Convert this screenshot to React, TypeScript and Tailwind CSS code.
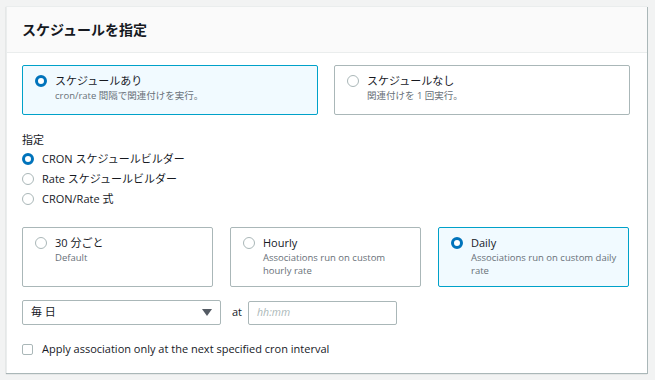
import React from "react";

const font = { fontFamily: '"Open Sans", "Noto Sans CJK JP", sans-serif' };

function Radio({ checked }: { checked: boolean }) {
  return checked ? (
    <span className="block w-[12px] h-[12px] rounded-full border-[3.5px] border-[#0073bb] bg-white shrink-0" />
  ) : (
    <span className="block w-[12px] h-[12px] rounded-full border border-[#aab7b8] bg-white shrink-0" />
  );
}

function Tile({ checked, title, desc, cls }: { checked: boolean; title: string; desc: string; cls: string }) {
  return (
    <div
      className={`${cls} border rounded-[2px] pl-[12px] pr-[6px] pt-[7px] ${
        checked ? "border-[#00a1c9] bg-[#f1faff]" : "border-[#aab7b8] bg-white"
      }`}
    >
      <div className="flex gap-[8px]">
        <div className="flex pt-[2px]">
          <Radio checked={checked} />
        </div>
        <div>
          <div className="text-[11px] leading-[16px] text-[#16191f]">{title}</div>
          <div className="text-[9.5px] leading-[13px] text-[#687078]">{desc}</div>
        </div>
      </div>
    </div>
  );
}

export default function App() {
  return (
    <div className="w-[655px] h-[380px] bg-[#f2f3f3] pt-[6px] pl-[6px]" style={font}>
      <div className="w-[641px] h-[367px] bg-white border-l border-t border-[#eaeded] shadow-[1px_1px_0_#aab7b8,0_1px_1px_rgba(0,28,36,0.3)]">
        <div className="h-[46px] bg-[#fafafa] border-b border-[#eaeded] flex items-center pl-[15px] pr-[16px]">
          <span className="text-[14px] font-bold text-[#16191f]">スケジュールを指定</span>
        </div>
        <div className="pl-[15px] pr-[16px] pt-[12px]">
          <div className="flex gap-[16px]">
            <Tile
              cls="w-[296px] h-[50px]"
              checked
              title="スケジュールあり"
              desc="cron/rate 間隔で関連付けを実行。"
            />
            <Tile cls="w-[296px] h-[50px]" checked={false} title="スケジュールなし" desc="関連付けを 1 回実行。" />
          </div>
          <div className="mt-[17px] text-[11px] leading-[16px] text-[#16191f]">指定</div>
          <div className="mt-[2px] flex flex-col gap-[2px] text-[11px] text-[#16191f]">
            {[
              ["CRON スケジュールビルダー", true],
              ["Rate スケジュールビルダー", false],
              ["CRON/Rate 式", false],
            ].map(([t, c]) => (
              <div key={t as string} className="flex items-center gap-[8px] h-[18px]">
                <Radio checked={c as boolean} />
                <span>{t as string}</span>
              </div>
            ))}
          </div>
          <div className="mt-[19px] flex gap-[17px]">
            <Tile cls="w-[191px] h-[60px]" checked={false} title="30 分ごと" desc="Default" />
            <Tile
              cls="w-[191px] h-[60px]"
              checked={false}
              title="Hourly"
              desc="Associations run on custom hourly rate"
            />
            <Tile
              cls="w-[191px] h-[60px]"
              checked
              title="Daily"
              desc="Associations run on custom daily rate"
            />
          </div>
          <div className="mt-[13px] flex items-center">
            <div className="w-[199px] h-[25px] border border-[#aab7b8] rounded-[2px] flex items-center justify-between px-[8px] text-[11px] text-[#16191f]">
              <span>毎 日</span>
              <svg width="10" height="7" viewBox="0 0 10 7">
                <path d="M0 0 L10 0 L5 7 Z" fill="#545b64" />
              </svg>
            </div>
            <span className="ml-[11px] text-[11px] text-[#16191f]">at</span>
            <div className="ml-[6px] w-[149px] h-[24px] border border-[#aab7b8] rounded-[2px] flex items-center px-[8px] text-[10.5px] italic text-[#aab7b8]">
              hh:mm
            </div>
          </div>
          <div className="mt-[16px] flex items-center gap-[9px]">
            <span className="block w-[11px] h-[11px] border border-[#aab7b8] rounded-[2px] bg-white" />
            <span className="text-[11px] text-[#16191f]">Apply association only at the next specified cron interval</span>
          </div>
        </div>
      </div>
    </div>
  );
}
